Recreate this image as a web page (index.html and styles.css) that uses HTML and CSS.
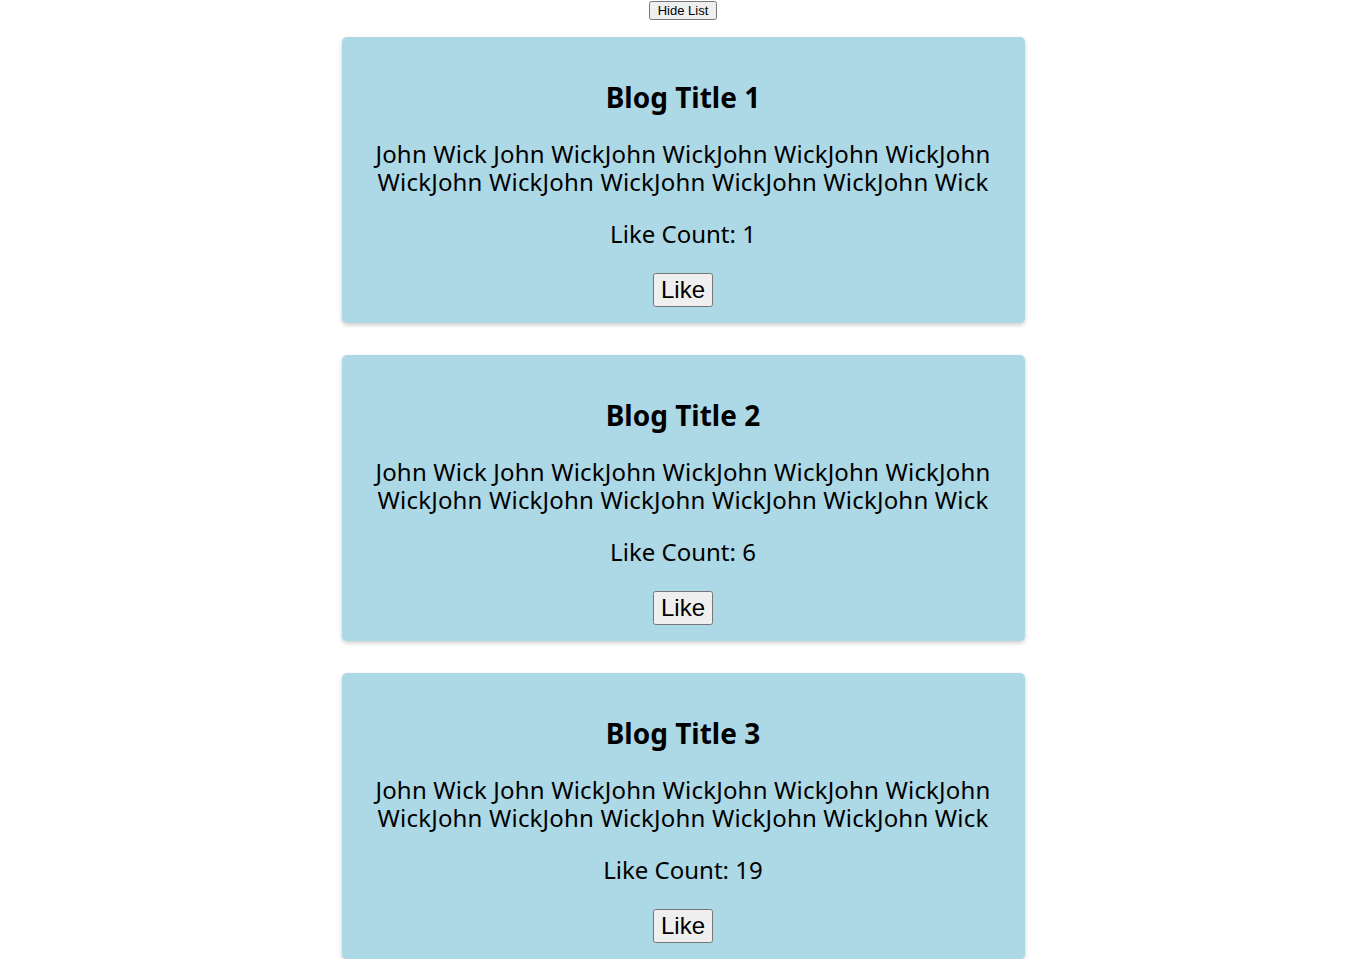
FILE: index.html
```html
<!DOCTYPE html>
<html>
<head>
<meta charset="utf-8">
<link rel="stylesheet" href="styles.css">
</head>
<body>
<div class="app">
  <div class="toolbar"><button class="toggle">Hide List</button></div>
  <div class="list">
    <div class="card">
      <h2 class="title">Blog Title 1</h2>
      <p class="body">John Wick John WickJohn WickJohn WickJohn WickJohn WickJohn WickJohn WickJohn WickJohn WickJohn Wick</p>
      <p class="count">Like Count: 1</p>
      <button class="like">Like</button>
    </div>
    <div class="card">
      <h2 class="title">Blog Title 2</h2>
      <p class="body">John Wick John WickJohn WickJohn WickJohn WickJohn WickJohn WickJohn WickJohn WickJohn WickJohn Wick</p>
      <p class="count">Like Count: 6</p>
      <button class="like">Like</button>
    </div>
    <div class="card">
      <h2 class="title">Blog Title 3</h2>
      <p class="body">John Wick John WickJohn WickJohn WickJohn WickJohn WickJohn WickJohn WickJohn WickJohn WickJohn Wick</p>
      <p class="count">Like Count: 19</p>
      <button class="like">Like</button>
    </div>
  </div>
</div>
</body>
</html>
```
FILE: styles.css
```css
html, body {
  margin: 0;
  padding: 0;
  background: #ffffff;
}
body {
  font-family: "Noto Sans", "DejaVu Sans", sans-serif;
  color: #000;
}
.app {
  display: flex;
  flex-direction: column;
  align-items: center;
}
.toolbar {
  display: flex;
  justify-content: center;
  padding-top: 1px;
}
.toggle {
  font-family: "Liberation Sans", Arial, sans-serif;
  font-size: 13px;
  height: 19px;
  padding: 0 7px;
  line-height: 15px;
}
.list {
  display: flex;
  flex-direction: column;
  gap: 32px;
  margin-top: 17px;
  width: 683px;
}
.card {
  background: #add8e6;
  border-radius: 5px;
  box-shadow: 0 2px 4px rgba(0, 0, 0, 0.2);
  padding: 43px 20px 16px;
  display: flex;
  flex-direction: column;
  align-items: center;
  text-align: center;
}
.title {
  margin: 0;
  font-size: 28px;
  line-height: 34px;
  font-weight: 700;
}
.body {
  margin: 26px 0 0;
  font-size: 24px;
  line-height: 28px;
  letter-spacing: 0.18px;
}
.count {
  margin: 24px 0 0;
  font-size: 24px;
  line-height: 28px;
}
.like {
  margin-top: 25px;
  font-family: "Liberation Sans", Arial, sans-serif;
  font-size: 24px;
  height: 34px;
  padding: 0 6px;
  line-height: 28px;
}
```
